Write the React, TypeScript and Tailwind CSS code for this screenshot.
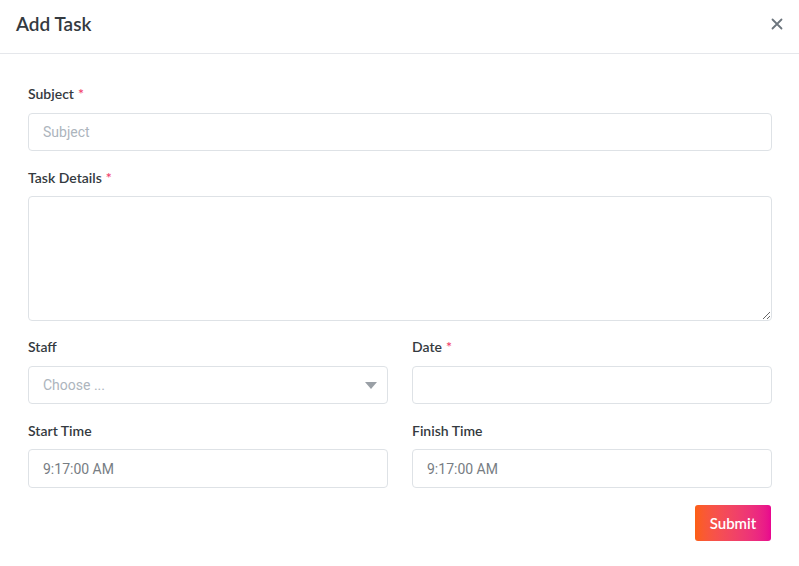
import React from "react";

const Label = ({ children, req }: { children: React.ReactNode; req?: boolean }) => (
  <label className="block text-[14px] leading-[21px] font-semibold text-[#343a40] mb-[8px]">
    {children}
    {req && <span className="text-[#f1416c] ml-[4px]">*</span>}
  </label>
);

const inputCls =
  "block w-full h-[38px] px-[14px] border border-[#dee2e6] rounded-[4px] bg-white text-[14px] text-[#777d83] placeholder:text-[#adb5bd] outline-none font-['Roboto',sans-serif]";

export default function App() {
  return (
    <div className="w-[799px] h-[566px] bg-white font-['Lato',sans-serif]">
      <div className="h-[54px] flex items-center justify-between pl-[16px] pr-[16px] pb-[6px] border-b border-[#e5e7eb]">
        <h2 className="text-[19px] font-semibold text-[#343a40] leading-none">Add Task</h2>
        <svg width="12" height="12" viewBox="0 0 12 12">
          <path d="M1.5 1.5L10.5 10.5M10.5 1.5L1.5 10.5" stroke="#6c757d" strokeWidth="1.8" strokeLinecap="round" />
        </svg>
      </div>
      <div className="pl-[28px] pr-[27px] pt-[29px]">
        <div className="mb-[16px]">
          <Label req>Subject</Label>
          <div className="pt-[1px]">
            <input className={inputCls} placeholder="Subject" />
          </div>
        </div>
        <div className="mb-[15px]">
          <Label req>Task Details</Label>
          <textarea className="block w-full h-[125px] px-[14px] py-[8px] border border-[#dee2e6] rounded-[4px] bg-white text-[14px] outline-none" />
        </div>
        <div className="grid grid-cols-2 gap-x-[24px]">
          <div className="mb-[16px]">
            <Label>Staff</Label>
            <div className="relative pt-[1px]">
              <div className={inputCls + " flex items-center text-[#adb5bd]"}>Choose ...</div>
              <svg width="12" height="7" viewBox="0 0 12 7" className="absolute right-[11px] top-[17px]">
                <path d="M0 0H12L6 7Z" fill="#9aa0a6" />
              </svg>
            </div>
          </div>
          <div className="mb-[16px]">
            <Label req>Date</Label>
            <div className="pt-[1px]">
              <input className={inputCls} />
            </div>
          </div>
          <div className="mb-[16px]">
            <Label>Start Time</Label>
            <input className={inputCls + " h-[39px]"} defaultValue="9:17:00 AM" />
          </div>
          <div className="mb-[16px]">
            <Label>Finish Time</Label>
            <input className={inputCls + " h-[39px]"} defaultValue="9:17:00 AM" />
          </div>
        </div>
        <div className="flex justify-end pt-[1px]">
          <button className="w-[76px] h-[36px] mr-[1px] rounded-[3px] text-white text-[15px] font-semibold bg-gradient-to-r from-[#fc5f12] to-[#e8068e]">
            Submit
          </button>
        </div>
      </div>
    </div>
  );
}
